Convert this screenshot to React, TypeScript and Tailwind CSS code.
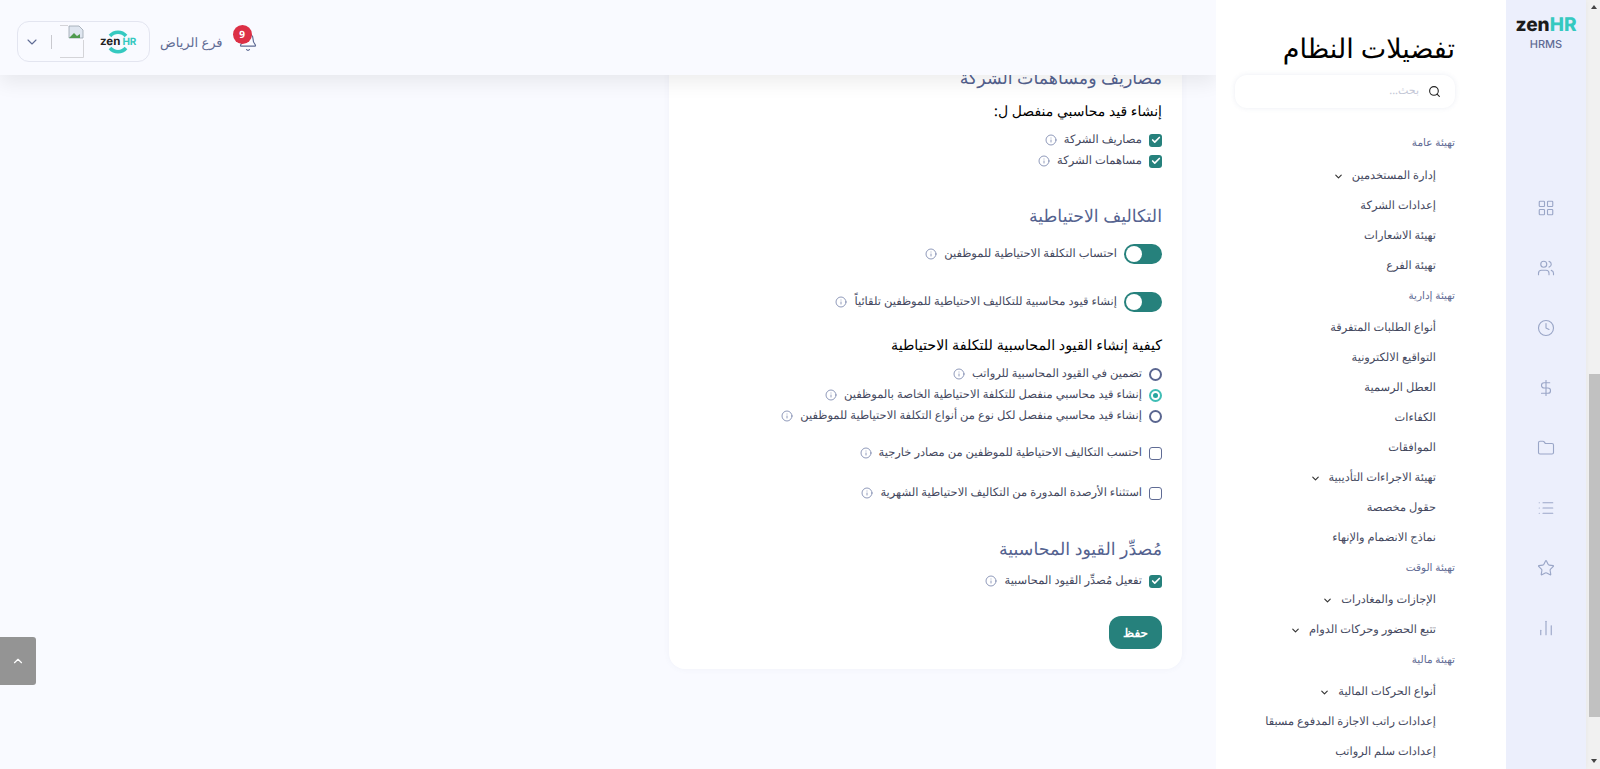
import React from "react";
import { Bell, ChevronDown, ChevronUp, Search, Info, Check, LayoutGrid, Users, Clock, DollarSign, Folder, List, Star, BarChart2 } from "lucide-react";

function Tip() {
  return <Info className="w-[12px] h-[12px] text-[#7480a8] shrink-0" strokeWidth={1.6} />;
}

function Cb({ on }: { on?: boolean }) {
  return on ? (
    <span className="w-[13px] h-[13px] rounded-[3px] bg-[#26817c] flex items-center justify-center shrink-0">
      <Check className="w-[10px] h-[10px] text-white" strokeWidth={4} />
    </span>
  ) : (
    <span className="w-[13px] h-[13px] rounded-[3px] border border-[#5f6b94] bg-white shrink-0" />
  );
}

function Radio({ on }: { on?: boolean }) {
  return on ? (
    <span className="w-[13px] h-[13px] rounded-full border-2 border-[#3fbdb5] flex items-center justify-center shrink-0">
      <span className="w-[5px] h-[5px] rounded-full bg-[#26a59e]" />
    </span>
  ) : (
    <span className="w-[13px] h-[13px] rounded-full border-2 border-[#5a6690] shrink-0" />
  );
}

function Toggle() {
  return (
    <span className="w-[38px] h-[20px] rounded-full bg-[#26817c] flex items-center justify-end pl-[2px] shrink-0">
      <span className="w-[16px] h-[16px] rounded-full bg-white" />
    </span>
  );
}

function Row({ ctrl, text, className = "" }: { ctrl: React.ReactNode; text: string; className?: string }) {
  return (
    <div className={`h-[20px] flex items-center gap-[7px] text-[11.5px] text-[#44485e] ${className}`}>
      {ctrl}
      <span>{text}</span>
      <Tip />
    </div>
  );
}

const H = ({ children, className = "" }: { children: React.ReactNode; className?: string }) => (
  <div className={`h-[24px] text-[17.4px] font-medium text-[#54628f] leading-[24px] ${className}`}>{children}</div>
);

const B = ({ children, className = "" }: { children: React.ReactNode; className?: string }) => (
  <div className={`h-[20px] leading-[20px] font-medium text-black ${className}`}>{children}</div>
);

type NavItem = { t: string; k: "head" | "item" | "sub" };
const nav: NavItem[] = [
  { t: "تهيئة عامة", k: "head" },
  { t: "إدارة المستخدمين", k: "sub" },
  { t: "إعدادات الشركة", k: "item" },
  { t: "تهيئة الاشعارات", k: "item" },
  { t: "تهيئة الفرع", k: "item" },
  { t: "تهيئة إدارية", k: "head" },
  { t: "أنواع الطلبات المتفرقة", k: "item" },
  { t: "التواقيع الالكترونية", k: "item" },
  { t: "العطل الرسمية", k: "item" },
  { t: "الكفاءات", k: "item" },
  { t: "الموافقات", k: "item" },
  { t: "تهيئة الاجراءات التأديبية", k: "sub" },
  { t: "حقول مخصصة", k: "item" },
  { t: "نماذج الانضمام والإنهاء", k: "item" },
  { t: "تهيئة الوقت", k: "head" },
  { t: "الإجازات والمغادرات", k: "sub" },
  { t: "تتبع الحضور وحركات الدوام", k: "sub" },
  { t: "تهيئة مالية", k: "head" },
  { t: "أنواع الحركات المالية", k: "sub" },
  { t: "إعدادات راتب الاجازة المدفوع مسبقا", k: "item" },
  { t: "إعدادات سلم الرواتب", k: "item" },
];

function Logo() {
  return (
    <div dir="ltr" className="relative w-[38px] h-[26px] flex items-center justify-start font-['Inter',sans-serif] font-bold leading-none shrink-0">
      <svg viewBox="0 0 26 26" className="absolute left-[5px] top-0 w-[26px] h-[26px]" fill="none" stroke="#35c9c0" strokeWidth="3.5">
        <path d="M5 7 A10.5 10.5 0 0 1 21 7" />
        <path d="M21 19 A10.5 10.5 0 0 1 5 19" />
      </svg>
      <span className="relative text-[#222] text-[11.5px]">zen</span>
      <span className="relative text-[#35c9c0] text-[10px] ml-[2px]">HR</span>
    </div>
  );
}

function BrokenImage() {
  return (
    <svg viewBox="0 0 25 33" className="w-[25px] h-[33px] shrink-0 mr-[16px]" fill="none">
      <path d="M1 .5H9M24.5 15V32.5H1" stroke="#d4d4d8" strokeWidth="1" />
      <path d="M10 1h10l4 4v8H10z" fill="#dfe6f0" stroke="#9aa3ad" strokeWidth=".8" />
      <path d="M10 13l5-5 3 3 3-2v4H10z" fill="#4f9a4f" />
    </svg>
  );
}

export default function App() {
  return (
    <div dir="rtl" className="relative h-[769px] w-[1600px] overflow-hidden flex bg-[#f9faff] [text-rendering:geometricPrecision] font-['Noto_Sans','Liberation_Sans',sans-serif]">
      <div className="w-[14px] h-full bg-[#f1f1f1] shrink-0 flex flex-col items-center pl-[2px]">
        <span className="mt-[5px] w-0 h-0 border-x-[3px] border-x-transparent border-b-[4px] border-b-[#444]" />
        <div className="mt-[365px] w-[11px] h-[343px] bg-[#c1c1c1]" />
        <span className="mt-[42px] w-0 h-0 border-x-[3px] border-x-transparent border-t-[4px] border-t-[#444]" />
      </div>
      <aside className="w-[80px] h-full bg-[#eceffc] flex flex-col items-center shrink-0 shadow-[0_0_6px_rgba(0,0,0,0.05)] z-20 font-['Inter',sans-serif]">
        <div className="mt-[15px] text-[19px] font-extrabold leading-[20px] text-[#1c1c1c]" dir="ltr">zen<span className="text-[#35c9c0]">HR</span></div>
        <div className="mt-[1px] text-[11px] font-medium leading-[16px] text-[#5f6b94]" dir="ltr">HRMS</div>
        <div className="mt-[147px] flex flex-col gap-[42px] text-[#9aa6c7]">
          <LayoutGrid className="w-[18px] h-[18px]" strokeWidth={1.5} />
          <Users className="w-[18px] h-[18px]" strokeWidth={1.5} />
          <Clock className="w-[18px] h-[18px]" strokeWidth={1.5} />
          <DollarSign className="w-[18px] h-[18px]" strokeWidth={1.5} />
          <Folder className="w-[18px] h-[18px]" strokeWidth={1.5} />
          <List className="w-[18px] h-[18px]" strokeWidth={1.5} />
          <Star className="w-[18px] h-[18px]" strokeWidth={1.5} />
          <BarChart2 className="w-[18px] h-[18px]" strokeWidth={1.5} />
        </div>
      </aside>
      <aside className="w-[290px] h-full bg-white shrink-0 pr-[51px] overflow-hidden z-20">
        <div className="mt-[28px] h-[40px] text-[27px] leading-[40px] text-black">تفضيلات النظام</div>
        <div className="mt-[7px] h-[33px] w-[220px] rounded-[12px] shadow-[0_0_5px_rgba(90,107,154,0.12)] flex items-center gap-[9px] pr-[14px] text-[11px] text-[#c3c7d6]">
          <Search className="w-[13px] h-[13px] text-[#222]" strokeWidth={2} />
          <span>بحث...</span>
        </div>
        <div className="mt-[20px] flex flex-col">
          {nav.map((n, i) =>
            n.k === "head" ? (
              <div key={n.t} className={`text-[10.5px] text-[#5f6b94] h-[30px] leading-[30px] ${i === 0 ? "mb-[3px]" : "mb-[2px]"}`}>{n.t}</div>
            ) : (
              <div key={n.t} className="h-[30px] shrink-0 flex items-center gap-[8px] text-[11.4px] text-[#44485e] pr-[19px]">
                <span>{n.t}</span>
                {n.k === "sub" && <ChevronDown className="w-[11px] h-[11px] text-[#333]" strokeWidth={2.5} />}
              </div>
            )
          )}
        </div>
      </aside>
      <main className="flex-1 relative">
        <header className="absolute top-0 left-0 right-0 h-[75px] bg-[#f9faff] shadow-[0_8px_18px_rgba(0,0,0,0.07)] z-10 flex items-center justify-end pl-[17px]">
          <div className="relative w-[24px] h-[24px] flex items-center justify-center ml-[13px] mt-[8px] text-[#5f6b94]">
            <Bell className="w-[20px] h-[20px]" strokeWidth={1.4} />
            <span className="absolute -top-[5px] right-[8px] w-[19px] h-[19px] rounded-full bg-[#dc2f45] text-white text-[10px] font-bold flex items-center justify-center">9</span>
          </div>
          <span className="text-[13px] text-[#5f6b94] ml-[10px] mt-[10px]">فرع الرياض</span>
          <div className="w-[133px] h-[41px] rounded-[12px] border border-[#e3e5f0] flex items-center pr-[11px] mt-[8px]">
            <Logo />
            <BrokenImage />
            <span className="w-px h-[14px] bg-[#c9c9cf] mr-[7px] shrink-0" />
            <ChevronDown className="w-[16px] h-[16px] text-[#5f6b94] mr-[11px] shrink-0" strokeWidth={1.6} />
          </div>
        </header>
        <div className="w-[513px] mr-[34px] bg-white rounded-[16px] shadow-[0_0_6px_rgba(90,107,154,0.06)] px-[20px] pt-[66px] pb-[20px]">
          <H>مصاريف ومساهمات الشركة</H>
          <B className="mt-[12px] text-[14px]">إنشاء قيد محاسبي منفصل ل:</B>
          <Row className="mt-[8px]" ctrl={<Cb on />} text="مصاريف الشركة" />
          <Row className="mt-[1px]" ctrl={<Cb on />} text="مساهمات الشركة" />
          <H className="mt-[33px]">التكاليف الاحتياطية</H>
          <Row className="mt-[16px]" ctrl={<Toggle />} text="احتساب التكلفة الاحتياطية للموظفين" />
          <Row className="mt-[28px]" ctrl={<Toggle />} text="إنشاء قيود محاسبية للتكاليف الاحتياطية للموظفين تلقائياً" />
          <B className="mt-[24px] text-[14.3px]">كيفية إنشاء القيود المحاسبية للتكلفة الاحتياطية</B>
          <Row className="mt-[8px]" ctrl={<Radio />} text="تضمين في القيود المحاسبية للرواتب" />
          <Row className="mt-[1px]" ctrl={<Radio on />} text="إنشاء قيد محاسبي منفصل للتكلفة الاحتياطية الخاصة بالموظفين" />
          <Row className="mt-[1px]" ctrl={<Radio />} text="إنشاء قيد محاسبي منفصل لكل نوع من أنواع التكلفة الاحتياطية للموظفين" />
          <Row className="mt-[17px]" ctrl={<Cb />} text="احتسب التكاليف الاحتياطية للموظفين من مصادر خارجية" />
          <Row className="mt-[20px]" ctrl={<Cb />} text="استثناء الأرصدة المدورة من التكاليف الاحتياطية الشهرية" />
          <H className="mt-[34px]">مُصدِّر القيود المحاسبية</H>
          <Row className="mt-[10px]" ctrl={<Cb on />} text="تفعيل مُصدِّر القيود المحاسبية" />
          <div className="mt-[25px] w-[53px] h-[33px] rounded-[12px] bg-[#26817c] text-white text-[12px] font-semibold flex items-center justify-center">حفظ</div>
        </div>
      </main>
      <div className="absolute left-0 top-[637px] w-[36px] h-[48px] bg-[#949494] rounded-r-[3px] flex items-center justify-center z-30">
        <ChevronUp className="w-[14px] h-[14px] text-white" strokeWidth={2} />
      </div>
    </div>
  );
}
